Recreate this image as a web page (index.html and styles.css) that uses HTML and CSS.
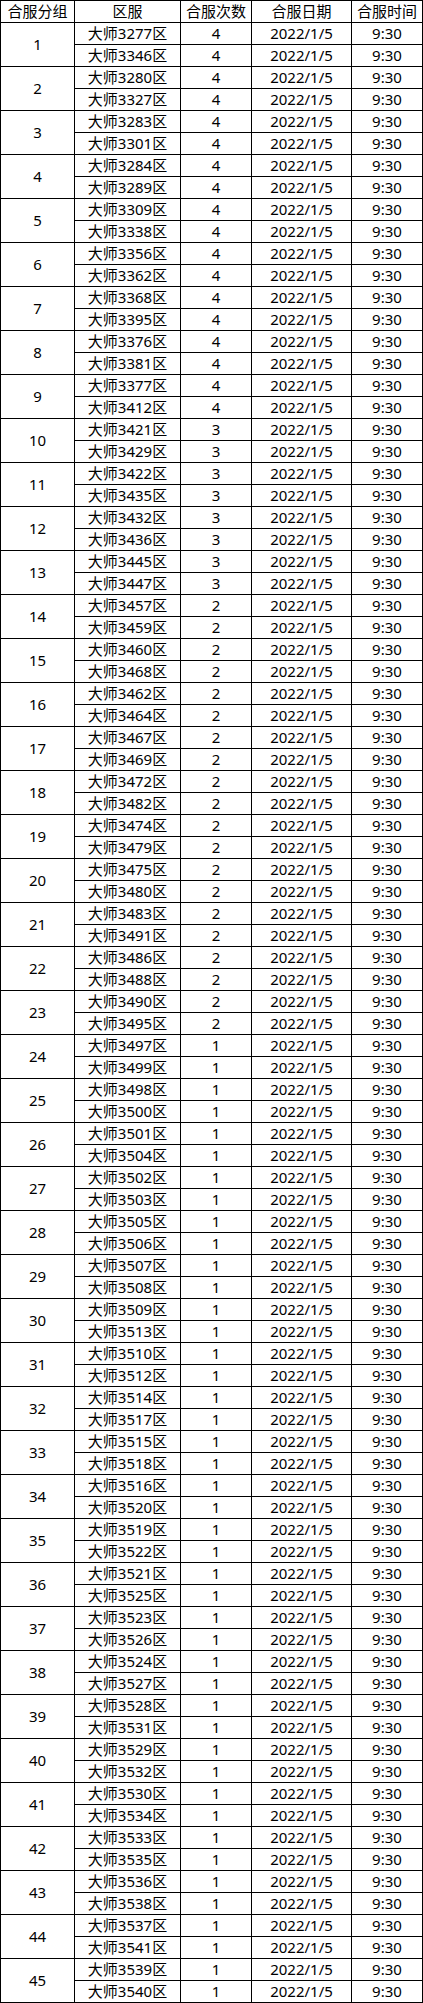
FILE: index.html
```html
<!DOCTYPE html>
<html lang="zh-CN">
<head>
<meta charset="utf-8">
<title>合服安排</title>
<link rel="stylesheet" href="styles.css">
</head>
<body>
<div class="sheet">
<div class="c h">合服分组</div><div class="c h">区服</div><div class="c h">合服次数</div><div class="c h">合服日期</div><div class="c h">合服时间</div>
<div class="c g">1</div><div class="c">大师3277区</div><div class="c">4</div><div class="c">2022/1/5</div><div class="c">9:30</div><div class="c">大师3346区</div><div class="c">4</div><div class="c">2022/1/5</div><div class="c">9:30</div>
<div class="c g">2</div><div class="c">大师3280区</div><div class="c">4</div><div class="c">2022/1/5</div><div class="c">9:30</div><div class="c">大师3327区</div><div class="c">4</div><div class="c">2022/1/5</div><div class="c">9:30</div>
<div class="c g">3</div><div class="c">大师3283区</div><div class="c">4</div><div class="c">2022/1/5</div><div class="c">9:30</div><div class="c">大师3301区</div><div class="c">4</div><div class="c">2022/1/5</div><div class="c">9:30</div>
<div class="c g">4</div><div class="c">大师3284区</div><div class="c">4</div><div class="c">2022/1/5</div><div class="c">9:30</div><div class="c">大师3289区</div><div class="c">4</div><div class="c">2022/1/5</div><div class="c">9:30</div>
<div class="c g">5</div><div class="c">大师3309区</div><div class="c">4</div><div class="c">2022/1/5</div><div class="c">9:30</div><div class="c">大师3338区</div><div class="c">4</div><div class="c">2022/1/5</div><div class="c">9:30</div>
<div class="c g">6</div><div class="c">大师3356区</div><div class="c">4</div><div class="c">2022/1/5</div><div class="c">9:30</div><div class="c">大师3362区</div><div class="c">4</div><div class="c">2022/1/5</div><div class="c">9:30</div>
<div class="c g">7</div><div class="c">大师3368区</div><div class="c">4</div><div class="c">2022/1/5</div><div class="c">9:30</div><div class="c">大师3395区</div><div class="c">4</div><div class="c">2022/1/5</div><div class="c">9:30</div>
<div class="c g">8</div><div class="c">大师3376区</div><div class="c">4</div><div class="c">2022/1/5</div><div class="c">9:30</div><div class="c">大师3381区</div><div class="c">4</div><div class="c">2022/1/5</div><div class="c">9:30</div>
<div class="c g">9</div><div class="c">大师3377区</div><div class="c">4</div><div class="c">2022/1/5</div><div class="c">9:30</div><div class="c">大师3412区</div><div class="c">4</div><div class="c">2022/1/5</div><div class="c">9:30</div>
<div class="c g">10</div><div class="c">大师3421区</div><div class="c">3</div><div class="c">2022/1/5</div><div class="c">9:30</div><div class="c">大师3429区</div><div class="c">3</div><div class="c">2022/1/5</div><div class="c">9:30</div>
<div class="c g">11</div><div class="c">大师3422区</div><div class="c">3</div><div class="c">2022/1/5</div><div class="c">9:30</div><div class="c">大师3435区</div><div class="c">3</div><div class="c">2022/1/5</div><div class="c">9:30</div>
<div class="c g">12</div><div class="c">大师3432区</div><div class="c">3</div><div class="c">2022/1/5</div><div class="c">9:30</div><div class="c">大师3436区</div><div class="c">3</div><div class="c">2022/1/5</div><div class="c">9:30</div>
<div class="c g">13</div><div class="c">大师3445区</div><div class="c">3</div><div class="c">2022/1/5</div><div class="c">9:30</div><div class="c">大师3447区</div><div class="c">3</div><div class="c">2022/1/5</div><div class="c">9:30</div>
<div class="c g">14</div><div class="c">大师3457区</div><div class="c">2</div><div class="c">2022/1/5</div><div class="c">9:30</div><div class="c">大师3459区</div><div class="c">2</div><div class="c">2022/1/5</div><div class="c">9:30</div>
<div class="c g">15</div><div class="c">大师3460区</div><div class="c">2</div><div class="c">2022/1/5</div><div class="c">9:30</div><div class="c">大师3468区</div><div class="c">2</div><div class="c">2022/1/5</div><div class="c">9:30</div>
<div class="c g">16</div><div class="c">大师3462区</div><div class="c">2</div><div class="c">2022/1/5</div><div class="c">9:30</div><div class="c">大师3464区</div><div class="c">2</div><div class="c">2022/1/5</div><div class="c">9:30</div>
<div class="c g">17</div><div class="c">大师3467区</div><div class="c">2</div><div class="c">2022/1/5</div><div class="c">9:30</div><div class="c">大师3469区</div><div class="c">2</div><div class="c">2022/1/5</div><div class="c">9:30</div>
<div class="c g">18</div><div class="c">大师3472区</div><div class="c">2</div><div class="c">2022/1/5</div><div class="c">9:30</div><div class="c">大师3482区</div><div class="c">2</div><div class="c">2022/1/5</div><div class="c">9:30</div>
<div class="c g">19</div><div class="c">大师3474区</div><div class="c">2</div><div class="c">2022/1/5</div><div class="c">9:30</div><div class="c">大师3479区</div><div class="c">2</div><div class="c">2022/1/5</div><div class="c">9:30</div>
<div class="c g">20</div><div class="c">大师3475区</div><div class="c">2</div><div class="c">2022/1/5</div><div class="c">9:30</div><div class="c">大师3480区</div><div class="c">2</div><div class="c">2022/1/5</div><div class="c">9:30</div>
<div class="c g">21</div><div class="c">大师3483区</div><div class="c">2</div><div class="c">2022/1/5</div><div class="c">9:30</div><div class="c">大师3491区</div><div class="c">2</div><div class="c">2022/1/5</div><div class="c">9:30</div>
<div class="c g">22</div><div class="c">大师3486区</div><div class="c">2</div><div class="c">2022/1/5</div><div class="c">9:30</div><div class="c">大师3488区</div><div class="c">2</div><div class="c">2022/1/5</div><div class="c">9:30</div>
<div class="c g">23</div><div class="c">大师3490区</div><div class="c">2</div><div class="c">2022/1/5</div><div class="c">9:30</div><div class="c">大师3495区</div><div class="c">2</div><div class="c">2022/1/5</div><div class="c">9:30</div>
<div class="c g">24</div><div class="c">大师3497区</div><div class="c">1</div><div class="c">2022/1/5</div><div class="c">9:30</div><div class="c">大师3499区</div><div class="c">1</div><div class="c">2022/1/5</div><div class="c">9:30</div>
<div class="c g">25</div><div class="c">大师3498区</div><div class="c">1</div><div class="c">2022/1/5</div><div class="c">9:30</div><div class="c">大师3500区</div><div class="c">1</div><div class="c">2022/1/5</div><div class="c">9:30</div>
<div class="c g">26</div><div class="c">大师3501区</div><div class="c">1</div><div class="c">2022/1/5</div><div class="c">9:30</div><div class="c">大师3504区</div><div class="c">1</div><div class="c">2022/1/5</div><div class="c">9:30</div>
<div class="c g">27</div><div class="c">大师3502区</div><div class="c">1</div><div class="c">2022/1/5</div><div class="c">9:30</div><div class="c">大师3503区</div><div class="c">1</div><div class="c">2022/1/5</div><div class="c">9:30</div>
<div class="c g">28</div><div class="c">大师3505区</div><div class="c">1</div><div class="c">2022/1/5</div><div class="c">9:30</div><div class="c">大师3506区</div><div class="c">1</div><div class="c">2022/1/5</div><div class="c">9:30</div>
<div class="c g">29</div><div class="c">大师3507区</div><div class="c">1</div><div class="c">2022/1/5</div><div class="c">9:30</div><div class="c">大师3508区</div><div class="c">1</div><div class="c">2022/1/5</div><div class="c">9:30</div>
<div class="c g">30</div><div class="c">大师3509区</div><div class="c">1</div><div class="c">2022/1/5</div><div class="c">9:30</div><div class="c">大师3513区</div><div class="c">1</div><div class="c">2022/1/5</div><div class="c">9:30</div>
<div class="c g">31</div><div class="c">大师3510区</div><div class="c">1</div><div class="c">2022/1/5</div><div class="c">9:30</div><div class="c">大师3512区</div><div class="c">1</div><div class="c">2022/1/5</div><div class="c">9:30</div>
<div class="c g">32</div><div class="c">大师3514区</div><div class="c">1</div><div class="c">2022/1/5</div><div class="c">9:30</div><div class="c">大师3517区</div><div class="c">1</div><div class="c">2022/1/5</div><div class="c">9:30</div>
<div class="c g">33</div><div class="c">大师3515区</div><div class="c">1</div><div class="c">2022/1/5</div><div class="c">9:30</div><div class="c">大师3518区</div><div class="c">1</div><div class="c">2022/1/5</div><div class="c">9:30</div>
<div class="c g">34</div><div class="c">大师3516区</div><div class="c">1</div><div class="c">2022/1/5</div><div class="c">9:30</div><div class="c">大师3520区</div><div class="c">1</div><div class="c">2022/1/5</div><div class="c">9:30</div>
<div class="c g">35</div><div class="c">大师3519区</div><div class="c">1</div><div class="c">2022/1/5</div><div class="c">9:30</div><div class="c">大师3522区</div><div class="c">1</div><div class="c">2022/1/5</div><div class="c">9:30</div>
<div class="c g">36</div><div class="c">大师3521区</div><div class="c">1</div><div class="c">2022/1/5</div><div class="c">9:30</div><div class="c">大师3525区</div><div class="c">1</div><div class="c">2022/1/5</div><div class="c">9:30</div>
<div class="c g">37</div><div class="c">大师3523区</div><div class="c">1</div><div class="c">2022/1/5</div><div class="c">9:30</div><div class="c">大师3526区</div><div class="c">1</div><div class="c">2022/1/5</div><div class="c">9:30</div>
<div class="c g">38</div><div class="c">大师3524区</div><div class="c">1</div><div class="c">2022/1/5</div><div class="c">9:30</div><div class="c">大师3527区</div><div class="c">1</div><div class="c">2022/1/5</div><div class="c">9:30</div>
<div class="c g">39</div><div class="c">大师3528区</div><div class="c">1</div><div class="c">2022/1/5</div><div class="c">9:30</div><div class="c">大师3531区</div><div class="c">1</div><div class="c">2022/1/5</div><div class="c">9:30</div>
<div class="c g">40</div><div class="c">大师3529区</div><div class="c">1</div><div class="c">2022/1/5</div><div class="c">9:30</div><div class="c">大师3532区</div><div class="c">1</div><div class="c">2022/1/5</div><div class="c">9:30</div>
<div class="c g">41</div><div class="c">大师3530区</div><div class="c">1</div><div class="c">2022/1/5</div><div class="c">9:30</div><div class="c">大师3534区</div><div class="c">1</div><div class="c">2022/1/5</div><div class="c">9:30</div>
<div class="c g">42</div><div class="c">大师3533区</div><div class="c">1</div><div class="c">2022/1/5</div><div class="c">9:30</div><div class="c">大师3535区</div><div class="c">1</div><div class="c">2022/1/5</div><div class="c">9:30</div>
<div class="c g">43</div><div class="c">大师3536区</div><div class="c">1</div><div class="c">2022/1/5</div><div class="c">9:30</div><div class="c">大师3538区</div><div class="c">1</div><div class="c">2022/1/5</div><div class="c">9:30</div>
<div class="c g">44</div><div class="c">大师3537区</div><div class="c">1</div><div class="c">2022/1/5</div><div class="c">9:30</div><div class="c">大师3541区</div><div class="c">1</div><div class="c">2022/1/5</div><div class="c">9:30</div>
<div class="c g">45</div><div class="c">大师3539区</div><div class="c">1</div><div class="c">2022/1/5</div><div class="c">9:30</div><div class="c">大师3540区</div><div class="c">1</div><div class="c">2022/1/5</div><div class="c">9:30</div>
</div>
</body>
</html>
```

FILE: styles.css
```css
html, body {
  margin: 0;
  padding: 0;
  background: #fff;
}

.sheet {
  display: grid;
  grid-template-columns: 74px 106px 71px 100px 71px;
  grid-auto-rows: 22px;
  width: 423px;
  box-sizing: border-box;
  border-top: 1px solid #000;
  border-left: 1px solid #000;
  font-family: "Noto Sans", "Noto Sans CJK SC", sans-serif;
  font-size: 15px;
  color: #000;
}

.c {
  display: flex;
  align-items: center;
  justify-content: center;
  border-right: 1px solid #000;
  border-bottom: 1px solid #000;
  line-height: 1;
  white-space: nowrap;
  overflow: hidden;
}

.g {
  grid-row: span 2;
}
```
